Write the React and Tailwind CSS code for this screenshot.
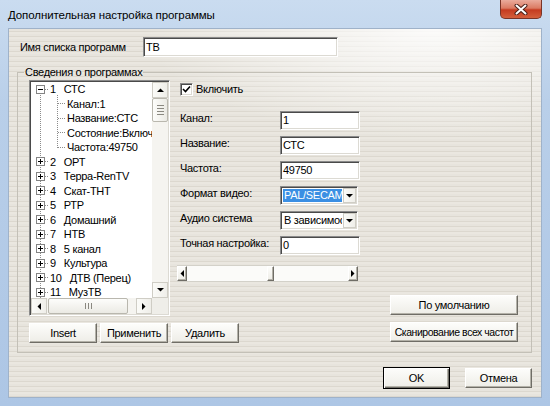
import React from "react";

const sunken =
  "border border-t-[#8a8a8a] border-l-[#8a8a8a] border-r-white border-b-white shadow-[inset_1px_1px_0_#4a4a4a,inset_-1px_-1px_0_#dcdad3]";
const raised =
  "border border-t-white border-l-white border-r-[#6f6d66] border-b-[#6f6d66] shadow-[inset_-1px_-1px_0_#b3b1a8] bg-[linear-gradient(180deg,#fdfdfb,#eeede7)]";
const flatBtn =
  "border border-[#cfcdc5] bg-[linear-gradient(90deg,#fbfbf8,#efeee9)]";

const rows = [
  { n: "1", name: "СТС", open: true },
  { c: "Канал:1" },
  { c: "Название:СТС" },
  { c: "Состояние:Включено" },
  { c: "Частота:49750" },
  { n: "2", name: "ОРТ" },
  { n: "3", name: "Терра-RenTV" },
  { n: "4", name: "Скат-ТНТ" },
  { n: "5", name: "РТР" },
  { n: "6", name: "Домашний" },
  { n: "7", name: "НТВ" },
  { n: "8", name: "5 канал" },
  { n: "9", name: "Культура" },
  { n: "10", name: "ДТВ (Перец)" },
  { n: "11", name: "МузТВ" },
];

function Arrow({ dir }) {
  const pts = {
    up: "0,4 3.5,0.5 7,4",
    down: "0,0 7,0 3.5,3.5",
    left: "4,0 4,7 0.5,3.5",
    right: "0,0 0,7 3.5,3.5",
  }[dir];
  const w = dir === "up" || dir === "down" ? 7 : 4;
  const h = dir === "up" || dir === "down" ? 4 : 7;
  return (
    <svg width={w} height={h} viewBox={`0 0 ${w} ${h}`}>
      <polygon points={pts} fill="#000" />
    </svg>
  );
}

function TreeLines() {
  const cy = (i) => Math.floor(7.25 + 14.5 * i);
  const dot = { stroke: "#8c8c8c", strokeDasharray: "1 1", shapeRendering: "crispEdges" };
  const els = [
    <line key="rv" x1="9.5" y1={cy(0)} x2="9.5" y2="216" {...dot} />,
    <line key="cv" x1="26.5" y1={cy(0) + 6} x2="26.5" y2={cy(4) + 1} {...dot} />,
  ];
  rows.forEach((r, i) => {
    const y = cy(i);
    if (r.c) {
      els.push(<line key={"c" + i} x1="27" y1={y + 0.5} x2="35" y2={y + 0.5} {...dot} />);
    } else {
      els.push(<line key={"h" + i} x1="14" y1={y + 0.5} x2="18" y2={y + 0.5} {...dot} />);
      els.push(
        <rect key={"b" + i} x="5.5" y={y - 3.5} width="8" height="8" fill="#fff" stroke="#848484" shapeRendering="crispEdges" />
      );
      els.push(<line key={"m" + i} x1="7" y1={y + 0.5} x2="12" y2={y + 0.5} stroke="#000" shapeRendering="crispEdges" />);
      if (!r.open)
        els.push(<line key={"p" + i} x1="9.5" y1={y - 2} x2="9.5" y2={y + 3} stroke="#000" shapeRendering="crispEdges" />);
    }
  });
  return (
    <svg className="absolute left-0 top-0 pointer-events-none" width="121" height="216">
      {els}
    </svg>
  );
}

function TreeBox() {
  return (
    <div className={`${sunken} p-[1px] w-[141px] h-[236px] bg-white flex flex-col`}>
      <div className="flex h-[216px]">
        <div className="relative w-[121px] h-[216px] overflow-hidden">
          <TreeLines />
          <div className="relative">
            {rows.map((r, i) =>
              r.c ? (
                <div key={i} className="h-[14.5px] leading-[14.5px] pl-[36px] whitespace-nowrap">
                  {r.c}
                </div>
              ) : (
                <div key={i} className="h-[14.5px] leading-[14.5px] pl-[19px] flex gap-[8px] whitespace-nowrap">
                  <span>{r.n}</span>
                  <span>{r.name}</span>
                </div>
              )
            )}
          </div>
        </div>
        <div className="w-[16px] h-[216px] flex flex-col bg-[#f5f4f0]">
          <div className={`${flatBtn} h-[16px] flex items-center justify-center`}>
            <Arrow dir="up" />
          </div>
          <div className="h-[24px] border border-[#b9b7ae] rounded-[2px] bg-[linear-gradient(90deg,#fdfdfb,#ebeae4)] flex flex-col items-center justify-center gap-[2px]">
            <div className="w-[7px] h-[1px] bg-[#8a8880]" />
            <div className="w-[7px] h-[1px] bg-[#8a8880]" />
            <div className="w-[7px] h-[1px] bg-[#8a8880]" />
            <div className="w-[7px] h-[1px] bg-[#8a8880]" />
          </div>
          <div className="flex-1" />
          <div className={`${flatBtn} h-[16px] flex items-center justify-center`}>
            <Arrow dir="down" />
          </div>
        </div>
      </div>
      <div className="flex h-[16px] bg-[#f5f4f0]">
        <div className={`${flatBtn} w-[16px] flex items-center justify-center`}>
          <Arrow dir="left" />
        </div>
        <div className="ml-[1px] w-[80px] border border-[#b9b7ae] rounded-[2px] bg-[linear-gradient(180deg,#fdfdfb,#ebeae4)] flex items-center justify-center gap-[2px]">
          <div className="w-[1px] h-[6px] bg-[#8a8880]" />
          <div className="w-[1px] h-[6px] bg-[#8a8880]" />
          <div className="w-[1px] h-[6px] bg-[#8a8880]" />
        </div>
        <div className="flex-1" />
        <div className={`${flatBtn} w-[16px] flex items-center justify-center`}>
          <Arrow dir="right" />
        </div>
        <div className="w-[16px] bg-[#efeee9]" />
      </div>
    </div>
  );
}

function Btn({ children, className = "" }) {
  return (
    <div className={`${raised} h-[20px] flex items-center justify-center leading-none whitespace-nowrap ${className}`}>
      {children}
    </div>
  );
}

function Field({ label, children }) {
  return (
    <div className="flex items-start mt-[6px] pl-[3px]">
      <div className="w-[100px] pt-[1px] leading-[13px]">{label}</div>
      {children}
    </div>
  );
}

function Input({ value, className = "w-[80px]" }) {
  return (
    <div className={`${sunken} ${className} h-[19px] bg-white flex items-center pl-[2px] leading-none`}>
      {value}
    </div>
  );
}

function Select({ value, selected }) {
  return (
    <div className={`${sunken} w-[78px] h-[19px] bg-white flex items-stretch p-[1px]`}>
      <div className="flex-1 flex items-center overflow-hidden p-[1px]">
        <div
          className={`h-full w-full flex items-center pl-[1px] whitespace-nowrap overflow-hidden leading-none ${
            selected ? "bg-[#3b8fe3] text-white" : ""
          }`}
        >
          {value}
        </div>
      </div>
      <div className={`${flatBtn} w-[13px] flex items-center justify-center`}>
        <Arrow dir="down" />
      </div>
    </div>
  );
}

export default function App() {
  return (
    <div className="w-[550px] h-[406px] flex flex-col overflow-hidden text-[11px] tracking-[-0.3px] text-black font-[family-name:'Liberation_Sans',Arial,sans-serif] bg-[linear-gradient(180deg,#cadcf0_0%,#b9cfe9_25%,#adc6e5_100%)]">
      <div className="h-[28px] shrink-0 flex items-start">
        <div className="flex-1 pl-[8px] pt-[8px] text-[11.5px] tracking-[-0.1px] leading-[14px]">
          Дополнительная настройка программы
        </div>
        <div className="mr-[8px] w-[42px] h-[19px] rounded-b-[5px] border border-t-0 border-[#7a3427] bg-[linear-gradient(180deg,#eaab9c_0%,#db7b63_45%,#c53b20_55%,#d45f3c_100%)] flex items-center justify-center">
          <svg width="14" height="11" viewBox="0 0 14 11">
            <path d="M2.5 1.5 L11.5 9.5 M11.5 1.5 L2.5 9.5" stroke="#4a1f17" strokeWidth="4" strokeLinecap="round" />
            <path d="M2.5 1.5 L11.5 9.5 M11.5 1.5 L2.5 9.5" stroke="#fff" strokeWidth="2" strokeLinecap="round" />
          </svg>
        </div>
      </div>

      <div className="mx-[8px] h-[370px] shrink-0 border border-[#9fb2c9] bg-[#e4e1da] bg-[radial-gradient(ellipse_55%_30%_at_80%_0%,rgba(255,255,255,0.85),rgba(255,255,255,0)),repeating-linear-gradient(180deg,#e7e4dd_0px,#e7e4dd_2px,#dcd8cf_2px,#dcd8cf_3px,#eae7e0_3px,#eae7e0_5px)] flex flex-col">
        <div className="flex items-center pt-[8px] pl-[11px]">
          <div className="w-[123px]">Имя списка программ</div>
          <Input value="ТВ" className="w-[195px] h-[20px]" />
        </div>

        <fieldset className="ml-[8px] mt-[8px] w-[515px] h-[288px] border border-[#c3c0b7] p-0 m-0">
          <legend className="ml-[6px] px-[1px] leading-[14px]">Сведения о программах</legend>
          <div className="flex items-start pl-[11px] pt-[1px]">
            <div className="w-[141px] shrink-0">
              <TreeBox />
              <div className="mt-[7px] w-max flex gap-[3px]">
                <Btn className="w-[68px]">Insert</Btn>
                <Btn className="w-[68px]">Применить</Btn>
                <Btn className="w-[68px]">Удалить</Btn>
              </div>
            </div>

            <div className="ml-[7px] flex flex-col">
              <div className="mt-[3px] pl-[3px] h-[13px] flex items-center gap-[3px]">
                <div className={`${sunken} w-[13px] h-[13px] bg-white flex items-center justify-center`}>
                  <svg width="9" height="9" viewBox="0 0 9 9">
                    <polyline points="1,4 3.5,6.5 8,1.5" fill="none" stroke="#000" strokeWidth="1.6" />
                  </svg>
                </div>
                <span>Включить</span>
              </div>

              <div className="mt-[9px]">
                <Field label="Канал:">
                  <Input value="1" />
                </Field>
                <Field label="Название:">
                  <Input value="СТС" />
                </Field>
                <Field label="Частота:">
                  <Input value="49750" />
                </Field>
                <Field label="Формат видео:">
                  <Select value="PAL/SECAM-D/K" selected />
                </Field>
                <Field label="Аудио система">
                  <Select value="В зависимости" />
                </Field>
                <Field label="Точная настройка:">
                  <Input value="0" />
                </Field>
              </div>

              <div className="mt-[10px] w-[181px] h-[17px] flex bg-[#fbfbf9] border-y border-[#d3d1c9]">
                <div className={`${raised} w-[10px] flex items-center justify-center`}>
                  <Arrow dir="left" />
                </div>
                <div className="w-[80px]" />
                <div className={`${raised} w-[7px]`} />
                <div className="flex-1" />
                <div className={`${raised} w-[10px] flex items-center justify-center`}>
                  <Arrow dir="right" />
                </div>
              </div>

              <div className="mt-[13px] ml-[213px] flex flex-col gap-[7px]">
                <Btn className="w-[128px]">По умолчанию</Btn>
                <Btn className="w-[128px] text-[10.5px] tracking-[-0.45px]">Сканирование всех частот</Btn>
              </div>
            </div>
          </div>
        </fieldset>

        <div className="mt-[14px] pr-[9px] flex justify-end items-center gap-[15px]">
          <div className="w-[67px] h-[22px] border border-black shadow-[inset_1px_1px_0_#fff,inset_-1px_-1px_0_#6f6d66,inset_-2px_-2px_0_#b3b1a8] bg-[linear-gradient(180deg,#fdfdfb,#eeede7)] flex items-center justify-center leading-none">
            OK
          </div>
          <Btn className="w-[67px]">Отмена</Btn>
        </div>
      </div>
    </div>
  );
}
